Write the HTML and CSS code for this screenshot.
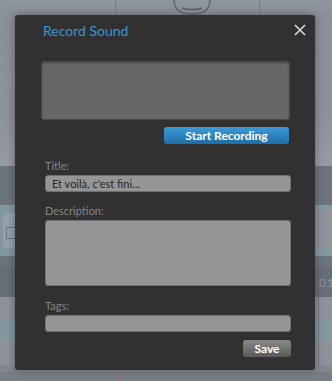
FILE: index.html
```html
<!DOCTYPE html>
<html lang="fr">
<head>
  <meta charset="UTF-8">
  <title>Record Sound</title>
  <link rel="stylesheet" href="styles.css">
</head>
<body>
  <div class="stage">
    <!-- app behind the dialog -->
    <div class="bg">
      <div class="band top">
        <span class="rule r1"></span>
        <span class="rule r2"></span>
        <svg class="face" width="40" height="15" viewBox="0 0 40 15">
          <path d="M2,0 C2,10 8,14 20,14 C32,14 38,10 38,0" />
          <path d="M10,8 C14,10 26,10 30,8" />
        </svg>
      </div>
      <div class="band b-light h151"></div>
      <div class="band b-dark h39"></div>
      <div class="band b-blue h51">
        <div class="chip"><span class="chip-icon"></span></div>
        <div class="panel"></div>
      </div>
      <div class="band b-dark h11"></div>
      <div class="band b-darker h30"><span class="num">01</span></div>
      <div class="band b-light h23"><span class="vline"></span></div>
      <div class="band b-blue h22"><span class="vline"></span></div>
      <div class="band b-light h23"><span class="vline"></span></div>
      <div class="band b-mid2 h7"></div>
      <div class="band b-foot h9">
        <span class="rule r3"></span>
      </div>
    </div>

    <!-- dialog -->
    <div class="dialog">
      <div class="dlg-title">Record Sound</div>
      <div class="close">
        <svg width="12" height="12" viewBox="0 0 12 12">
          <path d="M1,1 L11,11 M11,1 L1,11" />
        </svg>
      </div>

      <div class="wave"></div>
      <div class="rec-row">
        <button class="btn btn-blue">Start Recording</button>
      </div>

      <div class="form">
        <label class="lbl">Title:</label>
        <div class="field">Et voilà, c'est fini...</div>

        <label class="lbl">Description:</label>
        <div class="field area"></div>

        <label class="lbl">Tags:</label>
        <div class="field"></div>

        <div class="save-row">
          <button class="btn btn-grey">Save</button>
        </div>
      </div>
    </div>
  </div>
</body>
</html>
```

FILE: styles.css
```css
body{
  margin: 0;
  overflow: hidden;
  font-family: Lato, "Noto Sans", sans-serif;
}

.stage{
  position: relative;
  width: 332px;
  height: 381px;
  overflow: hidden;
  background: #8c9298;
}

/* background app, dimmed */
.bg{
  display: flex;
  flex-direction: column;
}
.band{
  position: relative;
  flex: none;
}
.top{
  height: 15px;
  background: linear-gradient(#8f969d, #899097);
}
.h151{ height: 151px; }
.h39{ height: 39px; }
.h51{ height: 51px; }
.h11{ height: 11px; }
.h30{ height: 30px; }
.h23{ height: 23px; }
.h22{ height: 22px; }
.h7{ height: 7px; }
.h9{ height: 9px; }

.b-light{ background: #8c9298; }
.h151{ background: linear-gradient(#899096, #8b9298 70%, #969ca2); }
.b-dark{ background: #6c747b; }
.b-darker{ background: #676f76; }
.b-blue{ background: #84979f; }
.b-mid2{ background: #82888d; }
.b-foot{ background: #777e84; }

.rule{
  position: absolute;
  top: 0;
  bottom: 0;
  width: 1px;
  background: #9c6e76;
}
.r1{ left: 115px; }
.r2{ left: 259px; }
.r3{ left: 118px; }

.vline{
  position: absolute;
  left: 318px;
  top: 0;
  bottom: 0;
  width: 1px;
  background: #767d83;
}

.face{
  position: absolute;
  left: 172px;
  top: 0;
  fill: none;
  stroke: #5d6670;
  stroke-width: 1.5;
}

.chip{
  position: absolute;
  left: 3px;
  top: 8px;
  width: 30px;
  height: 35px;
  border-radius: 4px;
  background: #93a2aa;
}
.chip-icon{
  position: absolute;
  left: 3px;
  top: 14px;
  width: 9px;
  height: 10px;
  border: 1px solid #687780;
}

.panel{
  position: absolute;
  left: 300px;
  right: 0;
  top: 5px;
  bottom: 8px;
  background: #8c9399;
}

.num{
  position: absolute;
  left: 319px;
  top: 8px;
  font-size: 12px;
  color: #8b9298;
  letter-spacing: 1px;
}

/* dialog */
.dialog{
  position: absolute;
  left: 15px;
  top: 15px;
  width: 300px;
  height: 355px;
  box-sizing: border-box;
  padding: 0 25px 0 26px;
  background: #313131;
  border-radius: 3px;
  box-shadow: 0 0 8px rgba(0,0,0,0.35);
}

.dlg-title{
  margin: 7px 0 0 2px;
  font-size: 14px;
  line-height: 18px;
  color: #3595d6;
}

.close{
  position: absolute;
  right: 9px;
  top: 9px;
  width: 12px;
  height: 12px;
}
.close svg{
  display: block;
  fill: none;
  stroke: #d9d9d9;
  stroke-width: 1.6;
}

.wave{
  margin-top: 21px;
  height: 59px;
  box-sizing: border-box;
  background: #676767;
  border: 1px solid #4a4a4a;
  border-radius: 3px;
  box-shadow: inset 0 1px 2px rgba(0,0,0,0.35);
}

.rec-row{
  display: flex;
  justify-content: flex-end;
  margin-top: 7px;
}

.btn{
  height: 17px;
  padding: 0;
  border: none;
  border-radius: 3px;
  font-family: Lato, "Noto Sans", sans-serif;
  font-size: 12px;
  font-weight: 700;
  line-height: 17px;
  color: #fff;
  cursor: pointer;
}
.btn-blue{
  width: 125px;
  margin-right: 1px;
  background: linear-gradient(#3d9bd9, #1f6ea6);
}
.btn-grey{
  width: 48px;
  background: linear-gradient(#8a8a8a, #595959);
}

.form{
  margin: 0 -1px 0 4px;
  display: flex;
  flex-direction: column;
}

.lbl{
  margin-top: 15px;
  font-size: 11px;
  line-height: 13px;
  color: #868686;
}
.lbl + .field{
  margin-top: 3px;
}
.form .lbl:nth-of-type(2){ margin-top: 12px; }
.form .lbl:nth-of-type(3){ margin-top: 13px; }

.field{
  height: 17px;
  box-sizing: border-box;
  padding: 0 6px;
  background: #959595;
  border: 1px solid #707070;
  border-radius: 3px;
  font-size: 11px;
  line-height: 15px;
  color: #262626;
}
.area{
  height: 66px;
}

.save-row{
  display: flex;
  justify-content: flex-end;
  margin-top: 8px;
}
```
